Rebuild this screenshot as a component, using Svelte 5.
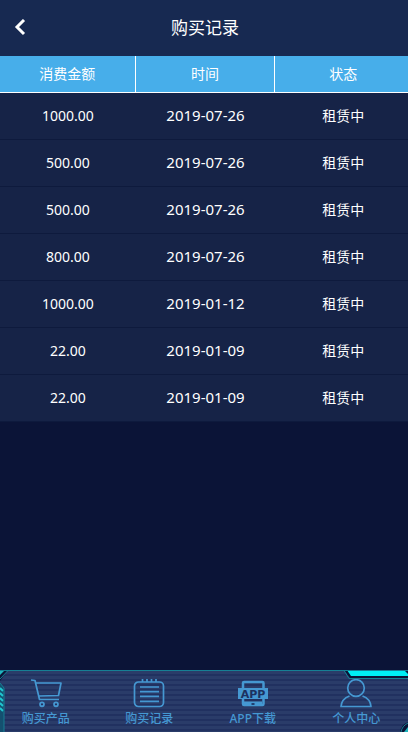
<script lang="ts">
  type Purchase = { amount: string; date: string; status: string };

  const purchases: Purchase[] = [
    { amount: "1000.00", date: "2019-07-26", status: "租赁中" },
    { amount: "500.00", date: "2019-07-26", status: "租赁中" },
    { amount: "500.00", date: "2019-07-26", status: "租赁中" },
    { amount: "800.00", date: "2019-07-26", status: "租赁中" },
    { amount: "1000.00", date: "2019-01-12", status: "租赁中" },
    { amount: "22.00", date: "2019-01-09", status: "租赁中" },
    { amount: "22.00", date: "2019-01-09", status: "租赁中" },
  ];

  const tabs = [
    { id: "products", label: "购买产品" },
    { id: "records", label: "购买记录" },
    { id: "download", label: "APP下载" },
    { id: "profile", label: "个人中心" },
  ];
</script>

<div class="page">
  <header>
    <button type="button" class="back" aria-label="返回" onclick={() => history.back()}>
      <svg viewBox="0 0 12 18" width="12" height="18">
        <path d="M10 1 3 8l7 7" />
      </svg>
    </button>
    <h1>购买记录</h1>
  </header>

  <main>
    <table>
      <thead>
        <tr>
          <th scope="col">消费金额</th>
          <th scope="col">时间</th>
          <th scope="col">状态</th>
        </tr>
      </thead>
      <tbody>
        {#each purchases as purchase}
          <tr>
            <td>{purchase.amount}</td>
            <td class="date">{purchase.date}</td>
            <td>{purchase.status}</td>
          </tr>
        {/each}
      </tbody>
    </table>
  </main>

  <nav>
    <!-- Neon frame pieces in the corners of the bar -->
    <svg class="corner left" viewBox="0 0 12 62" width="12" height="62" aria-hidden="true">
      <path d="M0 0h8L0 11z" fill="#0b1437" />
      <path d="M0 0h5L0 5z" fill="#20b5bd" />
      <path d="M12 .5H8L0 9" fill="none" stroke="#167f94" />
      <path d="M0 13l4 5v44H0z" fill="#14506f" />
      <path d="M0 18l3 3M0 23l3 3M0 28l3 3M0 33l3 3M0 38l3 3" stroke="#20c5cf" stroke-width="2" />
      <path d="M0 13l4 5v44" fill="none" stroke="#167f94" />
    </svg>
    <svg class="corner right" viewBox="0 0 68 62" width="68" height="62" aria-hidden="true">
      <path d="M4 0h64v8H10z" fill="#0b1437" />
      <path d="M7 0h57l4 4v2H11z" fill="#00eff5" />
      <path d="M0 .5h4l5 8h59" fill="none" stroke="#167f94" />
      <path d="M68 52q-7 3-8 10h8z" fill="#0b1437" />
      <path d="M68 53q-6 3-7 9" fill="none" stroke="#167f94" />
      <path d="M68 57l-4 5h4z" fill="#20b5bd" />
    </svg>
    <ul>
      {#each tabs as tab (tab.id)}
        <li>
          <a href="#{tab.id}" aria-current={tab.id === "records" ? "page" : undefined}>
            <svg viewBox="0 0 34 30" width="34" height="30" aria-hidden="true">
              {#if tab.id === "products"}
                <path d="M2 1l4 .5 4.5 19H30M7 4h25l-2.500 12.500L10 17" />
                <circle cx="13" cy="25.300" r="2" />
                <circle cx="27" cy="25.300" r="2" />
              {:else if tab.id === "records"}
                <rect x="2.5" y="3" width="29" height="24.5" rx="4" />
                <path d="M10.5 0v3M15 0v3M19.5 0v3M24 0v3M8 8h19M8 12.7h19M8 17.3h19M8 22.3h19" />
              {:else if tab.id === "download"}
                <rect x="7" y="3" width="20.5" height="23" rx="1" stroke-width="2.5" />
                <path d="M8 24.5h18" stroke-width="4" />
                <rect class="band" x="2" y="9" width="30" height="11" />
                <text x="17" y="18.5">APP</text>
                <path class="key" d="M15.5 25h3" />
              {:else}
                <circle cx="17" cy="9" r="8.3" />
                <path d="M10.5 17C5 19 2.5 22 2 27.5h30C31.5 22 29 19 23.5 17" />
              {/if}
            </svg>
            <span>{tab.label}</span>
          </a>
        </li>
      {/each}
    </ul>
  </nav>
</div>

<style>
  :global(body) {
    margin: 0;
    background: #0b1437;
  }
  .page {
    display: flex;
    flex-direction: column;
    min-height: 100vh;
    color: #fff;
    font-family: "Noto Sans", "Noto Sans CJK SC", sans-serif;
  }
  header {
    display: grid;
    grid-template-columns: 40px 1fr 38px;
    align-items: center;
    height: 56px;
    background: #172951;
  }
  .back {
    display: flex;
    align-items: center;
    justify-content: center;
    height: 52px;
    padding: 0;
    border: none;
    background: none;
    cursor: pointer;
  }
  .back svg {
    fill: none;
    stroke: #fff;
    stroke-width: 3;
  }
  h1 {
    margin: 0;
    font-size: 17px;
    font-weight: 400;
    line-height: 24px;
    text-align: center;
  }
  main {
    flex: 1;
    overflow-x: hidden;
  }
  /* The last column runs slightly past the right edge */
  table {
    width: calc(100% + 3px);
    border-spacing: 0;
    table-layout: fixed;
    text-align: center;
  }
  th {
    box-sizing: border-box;
    height: 37px;
    padding: 0;
    border-right: 1px solid #fff;
    border-bottom: 1px solid #fff;
    background: #47aeea;
    font-size: 14px;
    font-weight: 400;
    line-height: 20px;
  }
  th:last-child {
    border-right: none;
  }
  td {
    box-sizing: border-box;
    height: 47px;
    padding: 0;
    border-bottom: 1px solid #0e1a3d;
    background: #162347;
    font-size: 14px;
    line-height: 20px;
  }
  th:nth-child(2) {
    width: 34%;
  }
  .date {
    padding-bottom: 2px;
    font-size: 15px;
  }
  nav {
    position: sticky;
    bottom: 0;
    height: 62px;
    overflow: hidden;
    box-sizing: border-box;
    border-top: 1px solid #167f94;
    background: repeating-linear-gradient(#2a3c69 0 3px, #213160 3px 5px);
  }
  .corner {
    position: absolute;
    top: -1px;
  }
  .left {
    left: 0;
  }
  .right {
    right: 0;
  }
  ul {
    position: relative;
    display: flex;
    margin: 0 0 0 -6px;
    padding: 0;
    list-style: none;
  }
  li {
    flex: 1;
  }
  a {
    display: flex;
    flex-direction: column;
    align-items: center;
    padding-top: 8px;
    color: #4598d2;
    font-size: 12px;
    font-weight: 500;
    line-height: 20px;
    text-decoration: none;
  }
  a svg {
    fill: none;
    stroke: currentColor;
    stroke-width: 1.7;
    stroke-linejoin: round;
  }
  a .band {
    fill: currentColor;
    stroke: none;
  }
  a .key {
    stroke: #1c3160;
  }
  a text {
    fill: #1c3160;
    stroke: none;
    font-family: "DejaVu Sans", sans-serif;
    font-size: 11px;
    font-weight: 700;
    text-anchor: middle;
  }
</style>
